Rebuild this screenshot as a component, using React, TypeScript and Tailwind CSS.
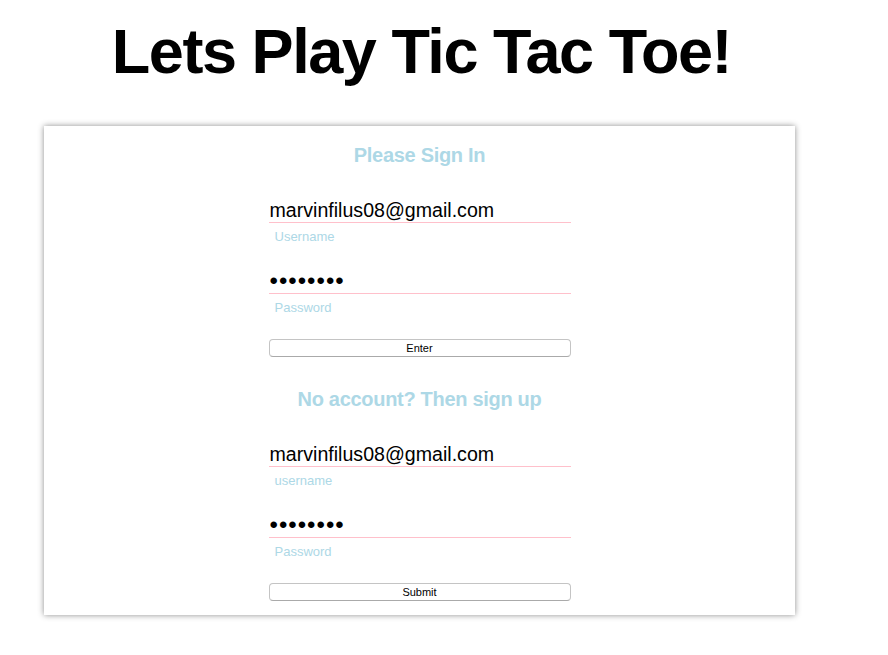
import React from "react";

function Field({ value, type, label }: { value: string; type: string; label: string }) {
  const isPw = type === "password";
  return (
    <div className="flex flex-col">
      <input
        readOnly
        type={type}
        value={value}
        className={
          "h-[25px] w-full border-0 border-b border-[#ffc0cb] bg-transparent p-0 pl-[1px] leading-[24px] text-black outline-none " +
          (isPw ? "text-[24px] tracking-[1px]" : "text-[19.6px]")
        }
        style={{ fontFamily: '"Liberation Sans", Arial, sans-serif' }}
      />
      <div className="mt-[6px] h-[16px] pl-[6px] text-[13px] leading-[16px] text-[#add8e6]">{label}</div>
    </div>
  );
}

function Block({ heading, userLabel, button }: { heading: string; userLabel: string; button: string }) {
  return (
    <div className="flex flex-col">
      <h3 className="text-center text-[20px] font-bold leading-[24px] tracking-[-0.3px] text-[#add8e6]">{heading}</h3>
      <div className="mx-auto mt-[31px] flex w-[302px] flex-col">
        <Field value="marvinfilus08@gmail.com" type="text" label={userLabel} />
        <div className="mt-[24px]">
          <Field value="password" type="password" label="Password" />
        </div>
        <button
          className="mt-[23px] h-[18px] w-full rounded-[4px] border border-[#c4c4c4] border-b-[#aaaaaa] bg-white text-[11px] leading-[16px] text-black"
          style={{ fontFamily: '"Liberation Sans", Arial, sans-serif' }}
        >
          {button}
        </button>
      </div>
    </div>
  );
}

export default function App() {
  return (
    <div
      className="min-h-[655px] w-[888px] bg-white"
      style={{ fontFamily: '"Liberation Sans", Arial, Helvetica, sans-serif' }}
    >
      <div className="ml-[44px] w-[751px] pt-[20px]">
        <h1 className="pl-[4px] text-center text-[63px] font-bold leading-[62px] tracking-[-1.45px] text-black">
          Lets Play Tic Tac Toe!
        </h1>
        <div className="mt-[44px] flex flex-col bg-white pb-[14px] pt-[17px] shadow-[0_0_6px_rgba(0,0,0,0.45)]">
          <Block heading="Please Sign In" userLabel="Username" button="Enter" />
          <div className="mt-[30px]">
            <Block heading="No account? Then sign up" userLabel="username" button="Submit" />
          </div>
        </div>
      </div>
    </div>
  );
}
